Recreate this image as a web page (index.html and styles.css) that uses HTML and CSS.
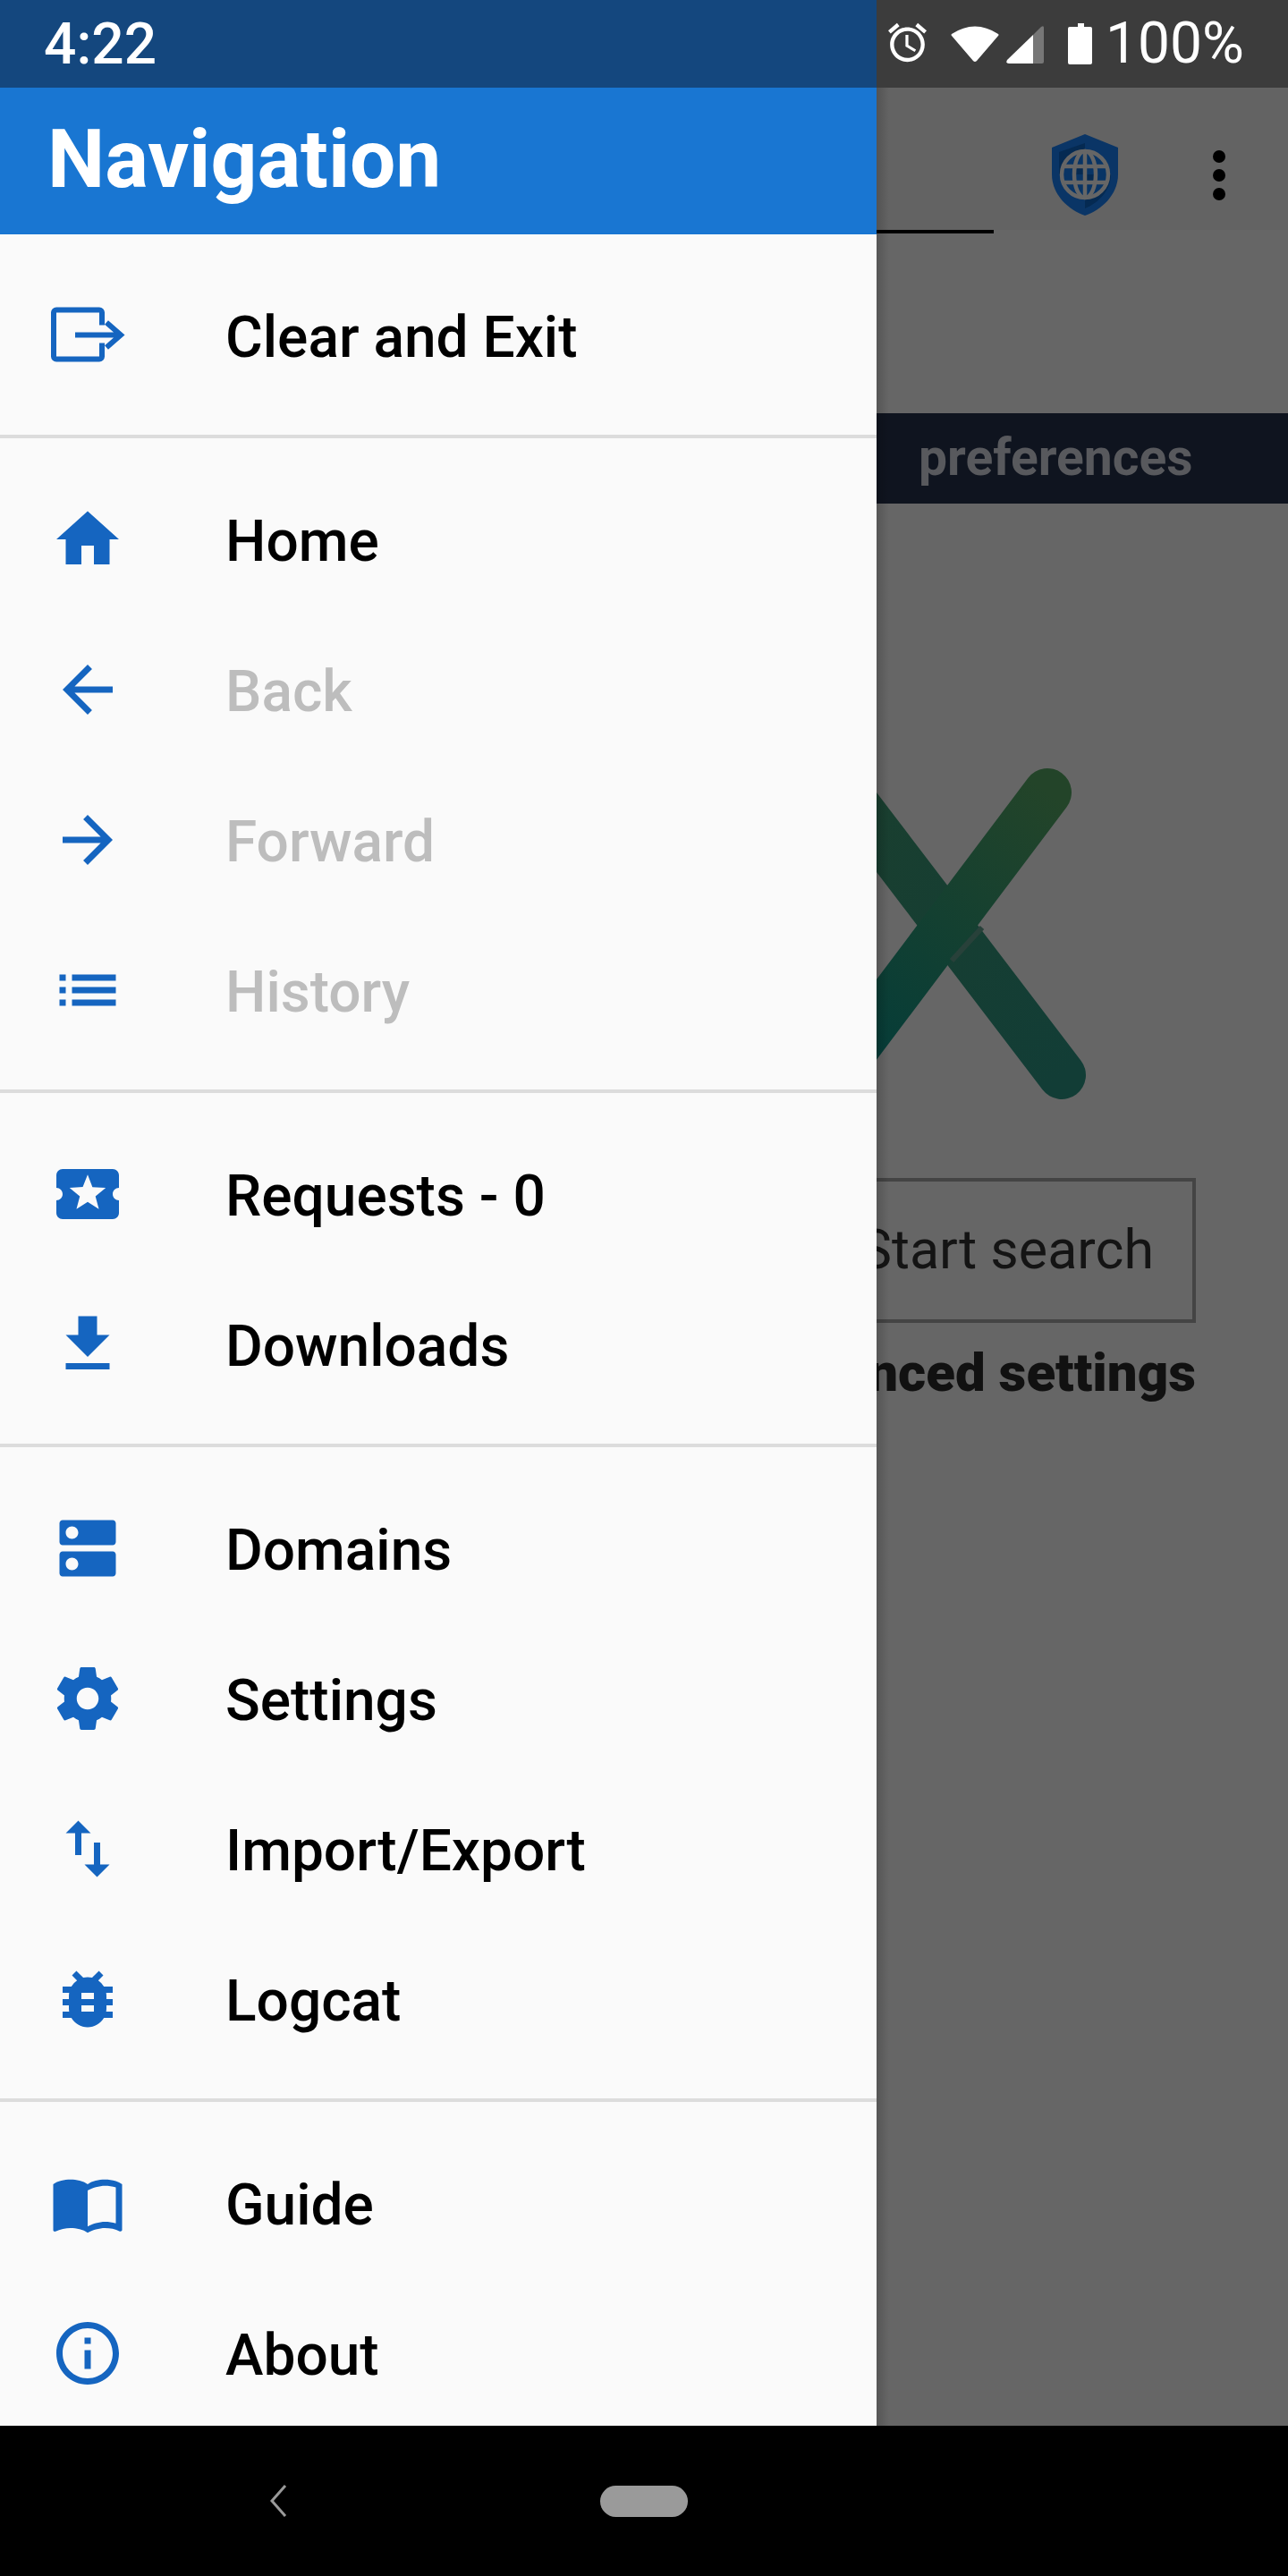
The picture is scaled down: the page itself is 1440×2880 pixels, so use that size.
FILE: index.html
```html
<!DOCTYPE html>
<html lang="en">
<head>
  <meta charset="UTF-8">
  <meta name="viewport" content="width=device-width, initial-scale=1.0">
  <title>Navigation</title>
  <link rel="stylesheet" href="styles.css">
</head>
<body>
  <div class="screen">
    <div class="main">
      <aside class="drawer">
        <div class="drawer-status">4:22</div>
        <div class="drawer-header">Navigation</div>

        <section class="nav-group">
          <div class="nav-row">
            <svg class="icon" viewBox="0 -1.5 84 84"><path class="exit-line" d="M58 29V15a3 3 0 0 0-3-3H7a3 3 0 0 0-3 3v49a3 3 0 0 0 3 3h48a3 3 0 0 0 3-3V49"/><path class="exit-line" d="M28 40h50M63 26l16 14-16 14"/></svg>
            <span class="nav-label">Clear and Exit</span>
          </div>
        </section>

        <section class="nav-group">
          <div class="nav-row">
            <svg class="icon" viewBox="0 0 24 24"><path d="M10 20v-6h4v6h5v-8h3L12 3 2 12h3v8z"/></svg>
            <span class="nav-label">Home</span>
          </div>
          <div class="nav-row">
            <svg class="icon" viewBox="0 0 24 24"><path d="M20 11H7.83l5.59-5.59L12 4l-8 8 8 8 1.41-1.41L7.83 13H20v-2z"/></svg>
            <span class="nav-label disabled">Back</span>
          </div>
          <div class="nav-row">
            <svg class="icon" viewBox="0 0 24 24"><path d="M12 4l-1.41 1.41L16.17 11H4v2h12.17l-5.58 5.59L12 20l8-8z"/></svg>
            <span class="nav-label disabled">Forward</span>
          </div>
          <div class="nav-row">
            <svg class="icon" viewBox="0 0 24 24"><path d="M3 13h2v-2H3v2zm0 4h2v-2H3v2zm0-8h2V7H3v2zm4 4h14v-2H7v2zm0 4h14v-2H7v2zM7 7v2h14V7H7z"/></svg>
            <span class="nav-label disabled">History</span>
          </div>
        </section>

        <section class="nav-group">
          <div class="nav-row">
            <svg class="icon" viewBox="0 0 24 24"><path d="M20 12c0-1.1.9-2 2-2V6c0-1.1-.9-2-2-2H4c-1.1 0-1.99.9-1.99 2v4c1.1 0 1.99.9 1.99 2s-.89 2-2 2v4c0 1.1.9 2 2 2h16c1.1 0 2-.9 2-2v-4c-1.1 0-2-.9-2-2zm-4.42 4.8L12 14.5l-3.58 2.3 1.08-4.12-3.29-2.69 4.24-.25L12 5.8l1.54 3.95 4.24.25-3.29 2.69 1.09 4.1z"/></svg>
            <span class="nav-label">Requests - 0</span>
          </div>
          <div class="nav-row">
            <svg class="icon" viewBox="0 0 24 24"><path d="M19 9h-4V3H9v6H5l7 7 7-7zM5 18v2h14v-2H5z"/></svg>
            <span class="nav-label">Downloads</span>
          </div>
        </section>

        <section class="nav-group">
          <div class="nav-row">
            <svg class="icon" viewBox="0 0 24 24"><path d="M20 13H4c-.55 0-1 .45-1 1v6c0 .55.45 1 1 1h16c.55 0 1-.45 1-1v-6c0-.55-.45-1-1-1zM7 19c-1.1 0-2-.9-2-2s.9-2 2-2 2 .9 2 2-.9 2-2 2zM20 3H4c-.55 0-1 .45-1 1v6c0 .55.45 1 1 1h16c.55 0 1-.45 1-1V4c0-.55-.45-1-1-1zM7 9c-1.1 0-2-.9-2-2s.9-2 2-2 2 .9 2 2-.9 2-2 2z"/></svg>
            <span class="nav-label">Domains</span>
          </div>
          <div class="nav-row">
            <svg class="icon" viewBox="0 0 24 24"><path d="M19.43 12.98c.04-.32.07-.64.07-.98s-.03-.66-.07-.98l2.11-1.65c.19-.15.24-.42.12-.64l-2-3.46c-.12-.22-.39-.3-.61-.22l-2.49 1c-.52-.4-1.08-.73-1.69-.98l-.38-2.65C14.46 2.18 14.25 2 14 2h-4c-.25 0-.46.18-.49.42l-.38 2.65c-.61.25-1.17.59-1.69.98l-2.49-1c-.23-.09-.49 0-.61.22l-2 3.46c-.13.22-.07.49.12.64l2.11 1.65c-.04.32-.07.65-.07.98s.03.66.07.98l-2.11 1.65c-.19.15-.24.42-.12.64l2 3.46c.12.22.39.3.61.22l2.49-1c.52.4 1.08.73 1.69.98l.38 2.65c.03.24.24.42.49.42h4c.25 0 .46-.18.49-.42l.38-2.65c.61-.25 1.17-.59 1.69-.98l2.49 1c.23.09.49 0 .61-.22l2-3.46c.12-.22.07-.49-.12-.64l-2.11-1.65zM12 15.5c-1.93 0-3.5-1.57-3.5-3.5s1.57-3.5 3.5-3.5 3.5 1.57 3.5 3.5-1.57 3.5-3.5 3.5z"/></svg>
            <span class="nav-label">Settings</span>
          </div>
          <div class="nav-row">
            <svg class="icon" viewBox="0 0 24 24"><path d="M9 3L5 6.99h3V14h2V6.99h3L9 3zm7 14.01V10h-2v7.01h-3L15 21l4-3.99h-3z"/></svg>
            <span class="nav-label">Import/Export</span>
          </div>
          <div class="nav-row">
            <svg class="icon" viewBox="0 0 24 24"><path d="M20 8h-2.81c-.45-.78-1.07-1.45-1.82-1.96L17 4.41 15.59 3l-2.17 2.17C12.96 5.06 12.49 5 12 5c-.49 0-.96.06-1.41.17L8.41 3 7 4.41l1.62 1.63C7.88 6.55 7.26 7.22 6.81 8H4v2h2.09c-.05.33-.09.66-.09 1v1H4v2h2v1c0 .34.04.67.09 1H4v2h2.81c1.04 1.79 2.97 3 5.19 3s4.15-1.21 5.19-3H20v-2h-2.09c.05-.33.09-.66.09-1v-1h2v-2h-2v-1c0-.34-.04-.67-.09-1H20V8zm-6 8h-4v-2h4v2zm0-4h-4v-2h4v2z"/></svg>
            <span class="nav-label">Logcat</span>
          </div>
        </section>

        <section class="nav-group">
          <div class="nav-row">
            <svg class="icon" viewBox="0 0 24 24"><path d="M21 5c-1.11-.35-2.33-.5-3.5-.5-1.95 0-4.05.4-5.5 1.5-1.45-1.1-3.55-1.5-5.5-1.5S2.45 4.9 1 6v14.65c0 .25.25.5.5.5.1 0 .15-.05.25-.05C3.1 20.45 5.05 20 6.5 20c1.95 0 4.05.4 5.5 1.5 1.35-.85 3.8-1.5 5.5-1.5 1.65 0 3.35.3 4.75 1.05.1.05.15.05.25.05.25 0 .5-.25.5-.5V6c-.6-.45-1.25-.75-2-1zm0 13.5c-1.1-.35-2.3-.5-3.5-.5-1.7 0-4.15.65-5.5 1.5V8c1.35-.85 3.8-1.5 5.5-1.5 1.2 0 2.4.15 3.5.5v11.5z"/></svg>
            <span class="nav-label">Guide</span>
          </div>
          <div class="nav-row">
            <svg class="icon" viewBox="0 0 24 24"><path d="M11 17h2v-6h-2v6zm1-15C6.48 2 2 6.48 2 12s4.48 10 10 10 10-4.48 10-10S17.52 2 12 2zm0 18c-4.41 0-8-3.59-8-8s3.59-8 8-8 8 3.59 8 8-3.59 8-8 8zM11 9h2V7h-2v2z"/></svg>
            <span class="nav-label">About</span>
          </div>
        </section>
      </aside>

      <div class="behind">
        <div class="status-right">
          <svg class="alarm" viewBox="2 1 20 23.25"><path d="M22 5.72l-4.6-3.86-1.29 1.53 4.6 3.86L22 5.72zM7.88 3.39L6.6 1.86 2 5.71l1.29 1.53 4.59-3.85zM12.5 8H11v6l4.75 2.85.75-1.23-4-2.37V8zM12 4c-4.97 0-9 4.03-9 9s4.03 9 9 9 9-4.03 9-9-4.03-9-9-9zm0 16c-3.87 0-7-3.13-7-7s3.13-7 7-7 7 3.13 7 7-3.13 7-7 7z"/></svg>
          <svg class="wifi" viewBox="0 0 54 50"><path d="M1 14Q27-3 53 14q1 1 0 2L29 44q-2 2-4 0L1 16q-1-1 0-2z"/></svg>
          <svg class="signal" viewBox="0 0 42 50"><path d="M30 15L1 43q-2 4 2 4h27z"/><path class="signal-off" d="M30 15l9-9q3-2 3 1v38q0 2-2 2H30z"/></svg>
          <svg class="battery" viewBox="0 0 27 50"><path d="M11 2h7v4h7q2 0 2 2v38q0 2-2 2H2q-2 0-2-2V8q0-2 2-2h9z"/></svg>
          <span class="battery-text">100%</span>
        </div>

        <div class="app">
          <div class="toolbar">
            <svg class="shield" viewBox="0 0 74 91">
              <path class="shield-base" d="M37 0l37 15v30c0 23-19 40-37 46C19 85 0 68 0 45V15z"/>
              <path class="shield-dark" d="M8 20l29-10v35H8zM37 45h29c0 18-14 32-29 38z"/>
              <circle class="globe-fill" cx="37" cy="45" r="27"/>
              <path class="globe-dark" d="M37 45h12v8H37zM25 37h12v8H25z"/>
              <g class="globe-lines">
                <circle cx="37" cy="45" r="26"/>
                <ellipse cx="37" cy="45" rx="12" ry="26"/>
                <path d="M13 36h48M13 54h48M37 19v52"/>
              </g>
            </svg>
            <div class="dots"><i></i><i></i><i></i></div>
          </div>
          <div class="url-line"></div>
          <div class="banner">preferences</div>
          <svg class="logo" viewBox="0 0 460 754">
            <defs>
              <linearGradient id="stroke-a" gradientUnits="userSpaceOnUse" x1="-30" y1="620" x2="191" y2="323">
                <stop offset="0" stop-color="#043c39"/>
                <stop offset="1" stop-color="#234429"/>
              </linearGradient>
              <linearGradient id="stroke-b" gradientUnits="userSpaceOnUse" x1="-30" y1="320" x2="207" y2="639">
                <stop offset="0" stop-color="#1a3f2f"/>
                <stop offset="1" stop-color="#123d36"/>
              </linearGradient>
            </defs>
            <path class="logo-stroke" stroke="url(#stroke-b)" d="M-40 315L207 639"/>
            <path class="logo-stroke" stroke="url(#stroke-a)" d="M191 323L-40 630"/>
            <path class="logo-fold" d="M84 511l34-37"/>
          </svg>
          <div class="search-row">
            <div class="search-button">Start search</div>
          </div>
          <div class="advanced-row">
            <span class="advanced">Advanced settings</span>
          </div>
        </div>
      </div>
    </div>

    <div class="navbar">
      <svg class="nav-back" viewBox="0 0 20 36"><path d="M18 1L3 18l15 17"/></svg>
      <div class="nav-home"></div>
    </div>
  </div>
</body>
</html>
```

FILE: styles.css
```css
body {
  margin: 0;
  font-family: Roboto, "Liberation Sans", sans-serif;
  background-color: #000;
}

.screen {
  display: flex;
  flex-direction: column;
  width: 1440px;
  height: 2880px;
  overflow: hidden;
}

.main {
  display: flex;
  height: 2712px;
}

/* Drawer */
.drawer {
  display: flex;
  flex-direction: column;
  width: 980px;
  height: 2712px;
  overflow: hidden;
  background-color: #fafafa;
}

.drawer-status {
  flex: none;
  height: 98px;
  padding-left: 49px;
  line-height: 100px;
  font-size: 64px;
  font-weight: 500;
  color: #fff;
  background-color: #14477e;
}

.drawer-header {
  flex: none;
  height: 164px;
  padding-left: 53px;
  line-height: 160px;
  font-size: 91px;
  font-weight: 700;
  color: #fff;
  background-color: #1976d2;
}

.nav-group {
  flex: none;
  padding: 30px 0 26px;
  border-bottom: 4px solid #dcdcdc;
}

.nav-group:last-child {
  border-bottom: none;
}

.nav-row {
  display: flex;
  align-items: center;
  height: 168px;
  padding-left: 56px;
}

.icon {
  flex: none;
  width: 84px;
  height: 84px;
  margin-bottom: 3px;
  fill: #1565c0;
}

.exit-line {
  fill: none;
  stroke: #1565c0;
  stroke-width: 6;
}

.nav-label {
  margin-left: 112px;
  padding-top: 2px;
  font-size: 64px;
  font-weight: 500;
  color: #000;
}

.nav-label.disabled {
  color: #bdbdbd;
}

/* App behind the drawer, already dimmed by the scrim */
.behind {
  display: flex;
  flex-direction: column;
  width: 460px;
  overflow: hidden;
}

.status-right {
  display: flex;
  flex: none;
  align-items: center;
  height: 98px;
  padding-left: 13px;
  color: #fff;
  background-color: #3c3c3c;
}

.status-right svg {
  flex: none;
  fill: #fff;
}

.alarm {
  width: 43px;
  height: 50px;
}

.wifi {
  width: 54px;
  height: 50px;
  margin-left: 27px;
}

.signal {
  width: 42px;
  height: 50px;
  margin-left: 8px;
}

.status-right .signal-off {
  fill: #777;
}

.battery {
  width: 27px;
  height: 50px;
  margin-left: 27px;
}

.battery-text {
  margin-left: 15px;
  font-size: 64px;
  line-height: 102px;
}

.app {
  position: relative;
  flex: 1;
  background-color: #666;
}

.app::before {
  content: "";
  position: absolute;
  top: 0;
  bottom: 0;
  left: 0;
  width: 14px;
  background: linear-gradient(to right, rgba(0, 0, 0, 0.16), rgba(0, 0, 0, 0));
}

.toolbar {
  display: flex;
  align-items: flex-start;
  height: 159px;
  background-color: #636363;
}

.shield {
  flex: none;
  width: 74px;
  height: 91px;
  margin: 52px 0 0 196px;
}

.shield-base {
  fill: #0a3566;
}

.shield-dark {
  fill: #052a52;
}

.globe-fill {
  fill: #083465;
}

.globe-dark {
  fill: #052a52;
}

.globe-lines {
  fill: none;
  stroke: #666;
  stroke-width: 4.5;
}

.dots {
  display: flex;
  flex-direction: column;
  gap: 7px;
  margin: 70px 0 0 106px;
}

.dots i {
  display: block;
  width: 14px;
  height: 14px;
  border-radius: 50%;
  background-color: #000;
}

.url-line {
  width: 131px;
  height: 4px;
  margin-bottom: 201px;
  background-color: #000;
}

.banner {
  height: 101px;
  padding-left: 47px;
  line-height: 100px;
  font-size: 57px;
  font-weight: 700;
  color: #58595d;
  background-color: #0f141f;
}

.logo {
  display: block;
  width: 460px;
  height: 754px;
}

.logo-stroke {
  fill: none;
  stroke-width: 54;
  stroke-linecap: round;
}

.logo-fold {
  fill: none;
  stroke: #28413a;
  stroke-width: 6;
}

.search-row,
.advanced-row {
  display: flex;
  justify-content: flex-end;
  padding-right: 103px;
  white-space: nowrap;
}

.search-button {
  flex: none;
  box-sizing: border-box;
  height: 162px;
  padding: 0 43px;
  line-height: 152px;
  font-size: 61px;
  color: #141414;
  border: 4px solid #444;
}

.advanced-row {
  height: 76px;
}

.advanced {
  flex: none;
  line-height: 112px;
  font-size: 60px;
  font-weight: 900;
  color: #111;
}

/* System navigation bar */
.navbar {
  display: flex;
  flex: none;
  align-items: center;
  height: 168px;
  padding-left: 301px;
  background-color: #000;
}

.nav-back {
  width: 20px;
  height: 36px;
  fill: none;
  stroke: #999;
  stroke-width: 3;
}

.nav-home {
  width: 98px;
  height: 35px;
  margin-left: 350px;
  border-radius: 18px;
  background-color: #9a9a9a;
}
```
